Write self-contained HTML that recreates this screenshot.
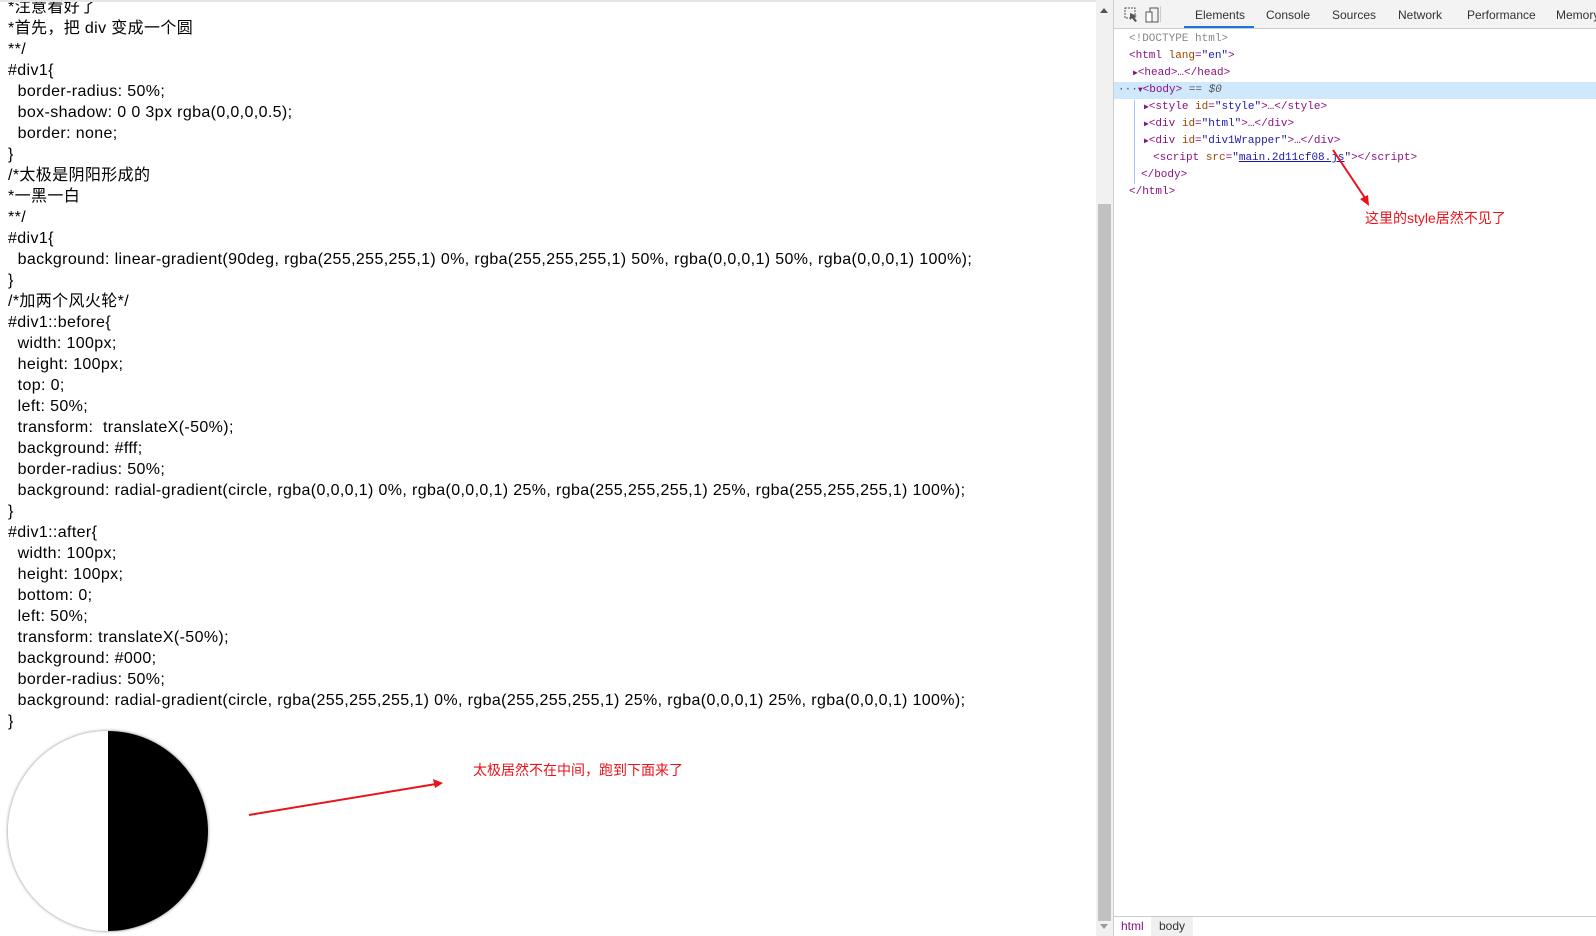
<!DOCTYPE html>
<html><head><meta charset="utf-8"><style>
*{margin:0;padding:0;box-sizing:border-box}
body{width:1596px;height:936px;overflow:hidden;background:#fff;position:relative;font-family:"Liberation Sans","Noto Sans CJK SC",sans-serif}
#code{position:absolute;left:8px;top:-3px;font-size:16px;line-height:21px;color:#000;white-space:pre;letter-spacing:.37px}
#circ{position:absolute;left:8px;top:731px;width:200px;height:200px;border-radius:50%;background:linear-gradient(90deg,#fff 50%,#000 50%);box-shadow:0 0 3px rgba(0,0,0,.5)}
.red{position:absolute;color:#e8131b;font-size:14px;font-family:"Liberation Sans","Noto Sans CJK SC",sans-serif}
#sb{position:absolute;left:1096px;top:0;width:17px;height:936px;background:#f1f1f1}
#thumb{position:absolute;left:1098px;top:204px;width:13px;height:717px;background:#c1c1c1}
#dt{position:absolute;left:1113px;top:0;width:483px;height:936px;border-left:1px solid #ccc;background:#fff;overflow:hidden}
#tabs{position:absolute;left:0;top:0;width:483px;height:29px;background:#f3f3f3;border-bottom:1px solid #ccc;font-size:12px;color:#333}
#tabs span{position:absolute;top:8px;white-space:nowrap}
.dom{position:absolute;font-family:"Liberation Mono",monospace;font-size:11px;line-height:17px;white-space:pre;color:#881280}
.g{color:#888}.a{color:#994500}.v{color:#1a1aa6}
#bot{position:absolute;left:0;top:916px;width:483px;height:20px;border-top:1px solid #ccc;background:#fff;font-size:12px}
</style></head><body>
<div id="code">*注意看好了
*首先，把 div 变成一个圆
**/
#div1{
  border-radius: 50%;
  box-shadow: 0 0 3px rgba(0,0,0,0.5);
  border: none;
}
/*太极是阴阳形成的
*一黑一白
**/
#div1{
  background: linear-gradient(90deg, rgba(255,255,255,1) 0%, rgba(255,255,255,1) 50%, rgba(0,0,0,1) 50%, rgba(0,0,0,1) 100%);
}
/*加两个风火轮*/
#div1::before{
  width: 100px;
  height: 100px;
  top: 0;
  left: 50%;
  transform:  translateX(-50%);
  background: #fff;
  border-radius: 50%;
  background: radial-gradient(circle, rgba(0,0,0,1) 0%, rgba(0,0,0,1) 25%, rgba(255,255,255,1) 25%, rgba(255,255,255,1) 100%);
}
#div1::after{
  width: 100px;
  height: 100px;
  bottom: 0;
  left: 50%;
  transform: translateX(-50%);
  background: #000;
  border-radius: 50%;
  background: radial-gradient(circle, rgba(255,255,255,1) 0%, rgba(255,255,255,1) 25%, rgba(0,0,0,1) 25%, rgba(0,0,0,1) 100%);
}</div>
<div id="circ"></div>
<div class="red" style="left:473px;top:760px">太极居然不在中间，跑到下面来了</div>
<div style="position:absolute;left:0;top:0;width:1096px;height:2px;background:#e6e6e6"></div>
<div id="sb"></div><div id="thumb"></div>
<div style="position:absolute;left:1100px;top:8px;width:0;height:0;border-left:4px solid transparent;border-right:4px solid transparent;border-bottom:5px solid #555"></div>
<div style="position:absolute;left:1100px;top:924px;width:0;height:0;border-left:4px solid transparent;border-right:4px solid transparent;border-top:5px solid #999"></div>
<div id="dt">
<div id="tabs">
<svg style="position:absolute;left:10px;top:7px" width="36" height="16"><rect x="1" y="1" width="10" height="10" fill="none" stroke="#555" stroke-dasharray="2 1"/><path d="M6 6 L13 9 L10 10 L13 14 L11 15 L8 11 L6 13Z" fill="#555"/><rect x="26" y="1" width="8" height="14" fill="none" stroke="#555"/><rect x="22" y="5" width="6" height="10" fill="#fff" stroke="#555"/></svg>
<div style="position:absolute;left:46px;top:6px;width:1px;height:16px;background:#ccc"></div>
<span style="left:81px;color:#333">Elements</span>
<div style="position:absolute;left:70px;top:26px;width:70px;height:2px;background:#1a73e8"></div>
<span style="left:152px">Console</span>
<span style="left:218px">Sources</span>
<span style="left:284px">Network</span>
<span style="left:353px">Performance</span>
<span style="left:442px">Memory</span>
</div>
<div style="position:absolute;left:0;top:82px;width:483px;height:17px;background:#cfe8fc"></div>
<div style="position:absolute;left:20px;top:100px;width:1px;height:84px;background:#a8c4f0"></div>
<div class="dom" style="left:15px;top:31px"><span class="g">&lt;!DOCTYPE html&gt;</span></div>
<div class="dom" style="left:15px;top:48px">&lt;html <span class="a">lang</span>=<span class="v">"en"</span>&gt;</div>
<div class="dom" style="left:19px;top:65px"><span style="font-size:8px">▶</span>&lt;head&gt;…&lt;/head&gt;</div>
<div class="dom" style="left:4px;top:82px"><span style="color:#555">···</span><span style="font-size:8px">▼</span>&lt;body&gt; <span style="color:#555">== <i>$0</i></span></div>
<div class="dom" style="left:30px;top:99px"><span style="font-size:8px">▶</span>&lt;style <span class="a">id</span>=<span class="v">"style"</span>&gt;…&lt;/style&gt;</div>
<div class="dom" style="left:30px;top:116px"><span style="font-size:8px">▶</span>&lt;div <span class="a">id</span>=<span class="v">"html"</span>&gt;…&lt;/div&gt;</div>
<div class="dom" style="left:30px;top:133px"><span style="font-size:8px">▶</span>&lt;div <span class="a">id</span>=<span class="v">"div1Wrapper"</span>&gt;…&lt;/div&gt;</div>
<div class="dom" style="left:39px;top:150px">&lt;script <span class="a">src</span>=<span class="v">"<u style="color:#1a1aa6">main.2d11cf08.js</u>"</span>&gt;&lt;/script&gt;</div>
<div class="dom" style="left:27px;top:167px">&lt;/body&gt;</div>
<div class="dom" style="left:15px;top:184px">&lt;/html&gt;</div>
<div id="bot"><span style="position:absolute;left:7px;top:2px;color:#881280">html</span><span style="position:absolute;left:37px;top:0;height:20px;padding:2px 8px;background:#f0f0f0;color:#333">body</span></div>
</div>
<svg style="position:absolute;left:0;top:0" width="1596" height="936">
<line x1="249" y1="815" x2="436" y2="784" stroke="#e8131b" stroke-width="2"/><path d="M443 783 L433 779 L435 788Z" fill="#e8131b"/>
<line x1="1333" y1="150" x2="1365" y2="198" stroke="#e8131b" stroke-width="2"/><path d="M1369 206 L1360 199 L1368 195Z" fill="#e8131b"/>
</svg>
<div class="red" style="left:1365px;top:208px">这里的style居然不见了</div>
</body></html>
